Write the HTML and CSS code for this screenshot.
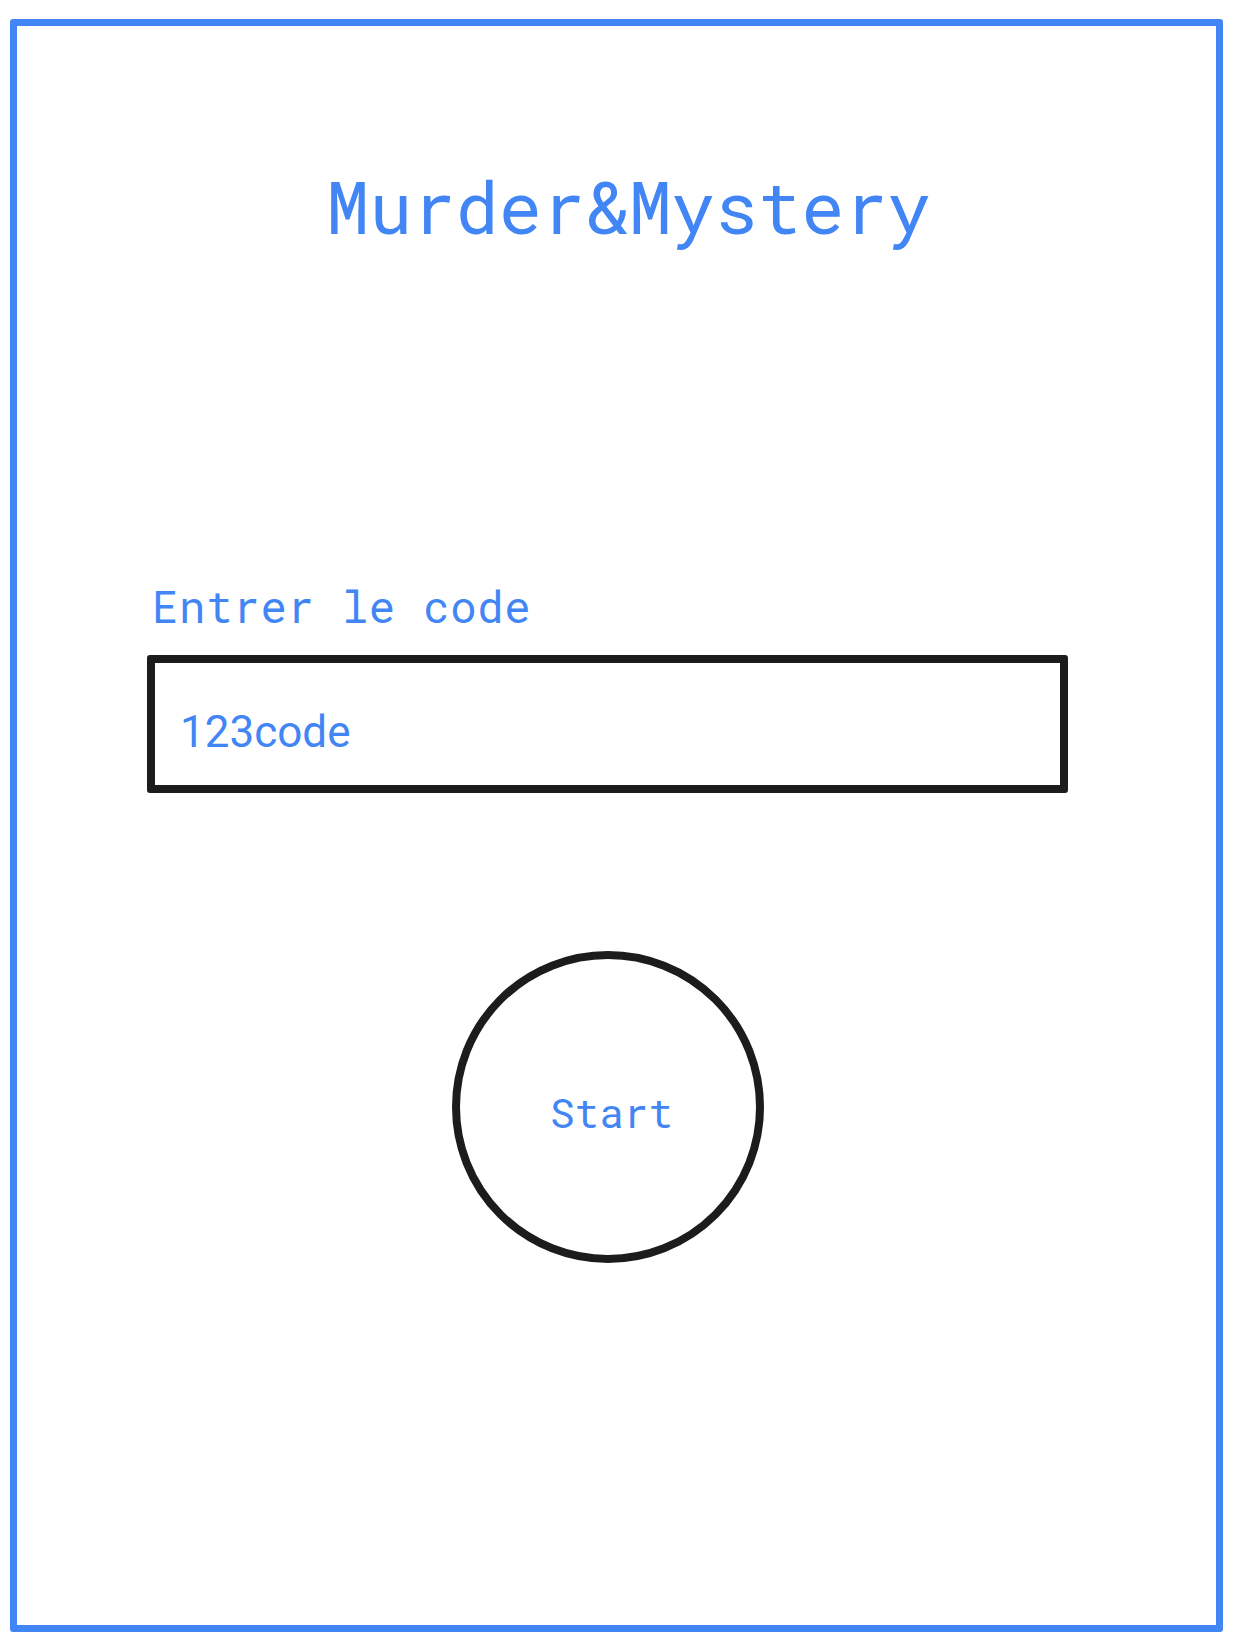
FILE: index.html
```html
<!DOCTYPE html>
<html lang="fr">
<head>
<meta charset="utf-8">
<title>Murder&amp;Mystery</title>
<link rel="stylesheet" href="styles.css">
</head>
<body>
<main class="frame">
  <h1 class="title">Murder&amp;Mystery</h1>
  <label class="label" for="code">Entrer le code</label>
  <div class="field" id="code">123code</div>
  <button class="start" type="button">Start</button>
</main>
</body>
</html>
```
FILE: styles.css
```css
html, body {
  margin: 0;
  padding: 0;
  background: #ffffff;
}
body {
  padding: 19px 0 0 10px;
  font-family: "Roboto Mono", "DejaVu Sans Mono", monospace;
  color: #4285f4;
}
.frame {
  box-sizing: border-box;
  width: 1213px;
  height: 1613px;
  border: 7px solid #4285f4;
  border-radius: 3px;
  display: flex;
  flex-direction: column;
  align-items: flex-start;
}
.title {
  margin: 145px 0 0 309px;
  font-size: 72px;
  line-height: 72px;
  font-weight: 400;
  white-space: nowrap;
}
.label {
  margin: 341px 0 0 135px;
  font-size: 44px;
  line-height: 44px;
  letter-spacing: 0.7px;
}
.field {
  box-sizing: border-box;
  margin: 27px 0 0 130px;
  width: 921px;
  height: 138px;
  border: 8px solid #1c1c1c;
  border-radius: 3px;
  padding: 47px 0 0 25px;
  font-family: "Roboto", sans-serif;
  font-size: 44px;
  line-height: 44px;
}
.start {
  box-sizing: border-box;
  margin: 158px 0 0 435px;
  width: 312px;
  height: 312px;
  border: 8px solid #1c1c1c;
  border-radius: 50%;
  background: #ffffff;
  padding: 11px 0 0 7px;
  display: flex;
  align-items: center;
  justify-content: center;
  font-family: "Roboto Mono", monospace;
  font-size: 41px;
  line-height: 41px;
  color: #4285f4;
}
```
